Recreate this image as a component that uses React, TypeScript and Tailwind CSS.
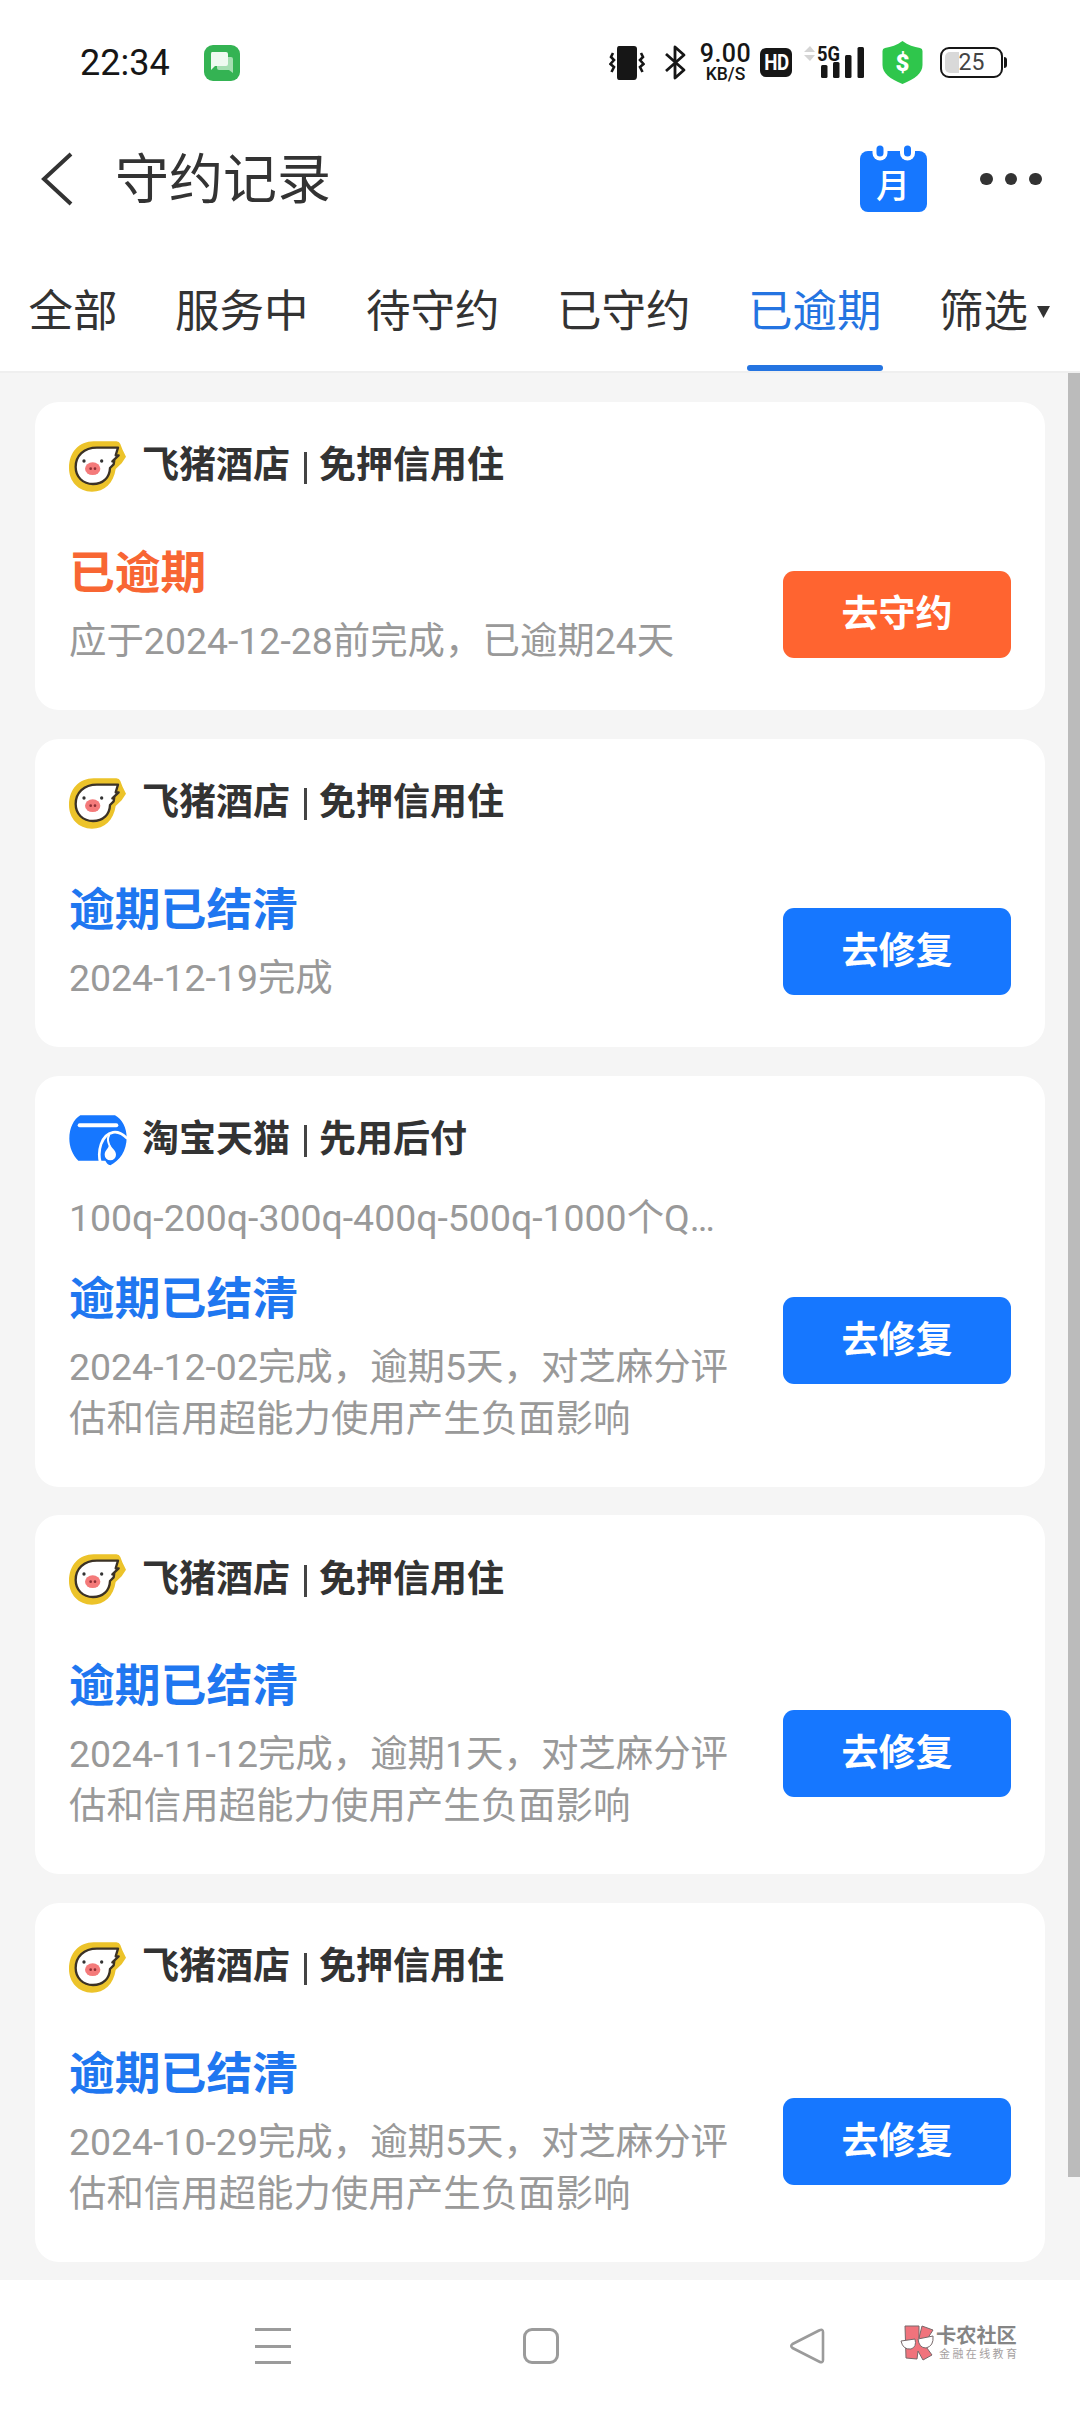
import React, { useState } from "react";
import classnames from "clsx";

type CardRecord = {
  id: number;
  brand: "fliggy" | "taobao";
  merchant: string;
  service: string;
  subtitle?: string;
  status: string;
  desc: string[];
  action: string;
  overdue?: boolean;
};

const tabs = ["全部", "服务中", "待守约", "已守约", "已逾期"];

const impact = "估和信用超能力使用产生负面影响";

const records: CardRecord[] = [
  {
    id: 1,
    brand: "fliggy",
    merchant: "飞猪酒店",
    service: "免押信用住",
    status: "已逾期",
    desc: ["应于2024-12-28前完成，已逾期24天"],
    action: "去守约",
    overdue: true,
  },
  {
    id: 2,
    brand: "fliggy",
    merchant: "飞猪酒店",
    service: "免押信用住",
    status: "逾期已结清",
    desc: ["2024-12-19完成"],
    action: "去修复",
  },
  {
    id: 3,
    brand: "taobao",
    merchant: "淘宝天猫",
    service: "先用后付",
    subtitle: "100q-200q-300q-400q-500q-1000个Q…",
    status: "逾期已结清",
    desc: ["2024-12-02完成，逾期5天，对芝麻分评", impact],
    action: "去修复",
  },
  {
    id: 4,
    brand: "fliggy",
    merchant: "飞猪酒店",
    service: "免押信用住",
    status: "逾期已结清",
    desc: ["2024-11-12完成，逾期1天，对芝麻分评", impact],
    action: "去修复",
  },
  {
    id: 5,
    brand: "fliggy",
    merchant: "飞猪酒店",
    service: "免押信用住",
    status: "逾期已结清",
    desc: ["2024-10-29完成，逾期5天，对芝麻分评", impact],
    action: "去修复",
  },
];

const FliggyLogo = () => (
  <svg className="h-[51px] w-[57px]" viewBox="28 37 171 153">
    <path
      d="M102 38H170Q179 38 182 46L188 62L199 84L186 104L168 121C162 164 134 189 97 189C56 189 28 158 28 118C28 70 58 39 102 38Z"
      fill="#ecc32a"
    />
    <path
      d="M175 57H112C72 57 48 82 48 115C48 145 70 166 100 166C130 166 150 147 151 118L162 107L164 94L158 98L177 80L168 80Z"
      fill="#fff"
      stroke="#3b3226"
      strokeWidth="7"
      strokeLinejoin="round"
    />
    <circle cx="73" cy="97" r="5" fill="#333" />
    <circle cx="126" cy="97" r="5" fill="#333" />
    <ellipse cx="99" cy="120" rx="23" ry="19" fill="#f47a7a" />
    <circle cx="93" cy="120" r="4" fill="#8c2f35" />
    <circle cx="106" cy="120" r="4" fill="#8c2f35" />
  </svg>
);

const TaobaoLogo = () => (
  <svg className="h-[51px] w-[58px]" viewBox="28 33 174 153">
    <path
      d="M62 34H166C188 46 201 72 201 100C201 142 180 170 152 184C145 182 140 177 137 170H56C38 152 29 128 29 104C29 72 42 46 62 34Z"
      fill="#1677ff"
    />
    <path d="M60 64H170" stroke="#fff" strokeWidth="12" strokeLinecap="round" />
    <path
      d="M122 176C113 142 124 92 160 85C178 82 190 90 203 104"
      fill="none"
      stroke="#fff"
      strokeWidth="8"
    />
    <path
      d="M149 92C141 106 146 116 151 128"
      fill="none"
      stroke="#fff"
      strokeWidth="6"
    />
    <path
      d="M149 118C150 132 135 138 135 152A17 17 0 0 0 169 152C169 138 154 132 149 118Z"
      fill="#fff"
    />
  </svg>
);

const StatusBar = () => {
  return (
    <div className="flex h-[123px] items-center pl-[80px] pt-[2px] text-[#161616]">
      <span className="w-[124px] text-[36px] leading-none">22:34</span>
      <svg className="h-9 w-9" viewBox="0 0 36 36">
        <rect width="36" height="36" rx="9" fill="#34b353" />
        <path d="M15 12H27Q29 12 29 14V28L25 25H15Q13 25 13 23V14Z" fill="#a5dfb2" />
        <path d="M8 7H22Q24 7 24 9V19Q24 21 22 21H11L7 25V9Q7 7 8 7Z" fill="#eefaf0" />
      </svg>
      {/* vibrate */}
      <svg
        className="ml-[369px] h-[34px] w-9"
        viewBox="0 0 36 34"
        fill="none"
        stroke="#161616"
        strokeWidth="2.6"
      >
        <path d="M10 0H25Q28 0 28 3V30Q28 34 25 34H10Q8 34 8 31V3Q8 0 10 0Z" fill="#161616" stroke="none" />
        <path d="M4 7L2 11L5 14L1.5 18L5 21L2.500 26" />
        <path d="M32 7L34 11L31 14L34.500 18L31 21L33.500 26" />
      </svg>
      <svg
        className="ml-[20px] h-[35px] w-[22px]"
        viewBox="0 0 22 35"
        fill="none"
        stroke="#161616"
        strokeWidth="2.8"
        strokeLinejoin="round"
      >
        <path d="M1 9L19 25L10 33V2L19 10L1 26" />
      </svg>
      <div className="ml-[12px] flex w-[53px] flex-col items-center font-medium">
        <span className="text-[25px] leading-[22px] tracking-[0.5px]">9.00</span>
        <span className="text-[17.500px] leading-[18px]">KB/S</span>
      </div>
      <span className="ml-[8px] flex h-[29px] w-8 items-center justify-center rounded-[6px] bg-[#161616] text-[22px] font-bold leading-none tracking-[-0.5px] text-white">
        <span className="scale-x-85">HD</span>
      </span>
      <svg className="ml-[12px] h-[46px] w-[62px]" viewBox="0 -5 62 46">
        <path d="M6 1L11 7H0Z M0 10H11L6 16Z" fill="#d4d4d4" />
        <text
          x="13"
          y="16"
          fontFamily="Roboto, sans-serif"
          fontSize="21"
          fontWeight="700"
          textLength="23"
          lengthAdjust="spacingAndGlyphs"
          fill="#161616"
        >
          5G
        </text>
        <g fill="#161616">
          <rect x="17" y="20" width="6.500" height="13" rx="1.500" />
          <rect x="29" y="17" width="6.500" height="16" rx="1.500" />
          <rect x="41" y="10" width="6.500" height="23" rx="1.500" />
          <rect x="53.500" y="2" width="6.500" height="31" rx="1.500" />
        </g>
      </svg>
      <svg className="ml-[16px] h-[43px] w-[41px]" viewBox="0 0 41 43">
        <path
          d="M20.500 0C26 4 32 6 38 7Q40.500 7.500 40.500 10V24C40.500 32 33 38 20.500 43C8 38 0.500 32 0.500 24V10Q0.500 7.500 3 7C9 6 15 4 20.500 0Z"
          fill="#2fc64c"
        />
        <text
          x="20.500"
          y="30"
          textAnchor="middle"
          fontFamily="Roboto, sans-serif"
          fontSize="24"
          fontWeight="900"
          fill="#fff"
        >
          $
        </text>
      </svg>
      <div className="ml-[17px] flex items-center gap-px">
        <div className="relative flex h-[31px] w-[63px] items-center justify-center rounded-[9px] border-2 border-[#161616]">
          <span className="absolute left-[3px] top-[3px] h-[21px] w-[14px] rounded-l-[5px] bg-[#d9d9d9]" />
          <span className="relative text-[23px] leading-none text-[#444]">25</span>
        </div>
        <span className="h-[11px] w-[3px] rounded-r-sm bg-[#161616]" />
      </div>
    </div>
  );
};

const Header = () => {
  return (
    <header className="flex h-[112px] items-center pl-[40px] text-[#333]">
      <svg
        className="h-[54px] w-[33px]"
        viewBox="0 0 33 54"
        fill="none"
        stroke="#333"
        strokeWidth="4"
      >
        <path d="M31 2L4 27L31 52" />
      </svg>
      <h1 className="ml-[42px] w-[744px] pt-[3px] text-[54px] leading-none">
        守约记录
      </h1>
      <svg className="h-[68px] w-[69px]" viewBox="0 0 69 68">
        <rect x="1" y="6" width="67" height="61" rx="8" fill="#1677ff" />
        <g stroke="#fff" strokeWidth="15" strokeLinecap="round">
          <path d="M21 3V8" />
          <path d="M48.500 3V8" />
        </g>
        <g stroke="#1677ff" strokeWidth="7" strokeLinecap="round">
          <path d="M21 4V8" />
          <path d="M48.500 4V8" />
        </g>
        <text
          x="34"
          y="53"
          textAnchor="middle"
          fontFamily="'Noto Sans CJK SC', sans-serif"
          fontSize="34"
          fontWeight="500"
          fill="#fff"
        >
          月
        </text>
      </svg>
      <div className="ml-[52px] flex gap-[12px]">
        {Array.from({ length: 3 }).map((_, index) => (
          <span className="h-[12.500px] w-[12.500px] rounded-full bg-[#333]" key={index} />
        ))}
      </div>
    </header>
  );
};

const Tabs = () => {
  const [active, setActive] = useState("已逾期");

  return (
    <nav className="flex h-[136px] items-stretch gap-[57.500px] pl-[28.500px] text-[44.500px] text-[#333]">
      {tabs.map((tab) => (
        <button
          className={classnames(
            "relative whitespace-nowrap pt-[18px] leading-none",
            tab === active && "text-[#2474e1]"
          )}
          onClick={() => setActive(tab)}
          key={tab}
        >
          {tab}
          {tab === active && (
            <span className="absolute -inset-x-px bottom-0 h-[6px] rounded-full bg-[#2474e1]" />
          )}
        </button>
      ))}
      <button className="flex items-center gap-[9px] whitespace-nowrap pt-[18px] leading-none">
        筛选
        <svg className="h-[12px] w-[13px]" viewBox="0 0 13 12">
          <path d="M0 0H13L6.500 12Z" fill="#333" />
        </svg>
      </button>
    </nav>
  );
};

const RecordCard = ({ record }: { record: CardRecord }) => {
  const cardCls = classnames(
    "rounded-[24px] bg-white px-[34px] pt-[38px]",
    record.subtitle && "pb-[42px]",
    !record.subtitle && record.desc.length > 1 && "pb-[42px]",
    record.desc.length === 1 && "pb-[43px]"
  );
  const statusCls = classnames(
    "h-[58px] pt-[2px] text-[45.800px] font-bold leading-[58px]",
    record.overdue ? "text-[#f86633]" : "text-[#1f77f0]"
  );
  const buttonCls = classnames(
    "h-[87px] w-[228px] rounded-[11px] text-[37px] font-bold leading-none text-white",
    record.overdue ? "bg-[#ff6430]" : "bg-[#1677ff]",
    record.subtitle ? "-mt-[33px]" : "mt-[19px]"
  );

  return (
    <li className={cardCls}>
      <div className="flex h-[52px] items-center text-[37px] font-bold text-[#333]">
        <span className="w-[73px] pt-px">
          {record.brand === "fliggy" ? <FliggyLogo /> : <TaobaoLogo />}
        </span>
        <span>{record.merchant}</span>
        <span className="ml-[14px] mr-[12px] mt-[3px] h-[32px] w-[3px] bg-[#444]" />
        <span>{record.service}</span>
      </div>
      {record.subtitle && (
        <p className="mt-[26px] h-[52px] text-[37.440px] leading-[52px] text-[#999]">
          {record.subtitle}
        </p>
      )}
      <div
        className={classnames(
          "flex items-center justify-between",
          record.subtitle ? "mt-[25px]" : "mt-[51px]"
        )}
      >
        <div>
          <p className={statusCls}>{record.status}</p>
          <div className="mt-[14px] text-[37.440px] leading-[52px] text-[#999]">
            {record.desc.map((line, index) => (
              <p className="whitespace-nowrap" key={index}>
                {line}
              </p>
            ))}
          </div>
        </div>
        <button className={buttonCls}>{record.action}</button>
      </div>
    </li>
  );
};

const Watermark = () => (
  <div className="flex items-center">
    <svg className="h-[36px] w-[35px]" viewBox="0 0 35 36">
      <g fill="#f0737c" stroke="#77686a" strokeWidth="1">
        <path d="M5 1H19V13L22 1L33 5L24 19L32 30L23 35L18 26L17 34L6 33Z" />
      </g>
      <g fill="#fff" stroke="#77686a" strokeWidth="1">
        <path d="M1 16L15 14Q17 22 11 24Q3 25 1 16Z" />
        <path d="M18 14L33 11Q34 21 26 23Q19 23 18 14Z" />
      </g>
    </svg>
    <div className="ml-px flex flex-col pt-[2px]">
      <span className="text-[20.200px] font-bold leading-[20px] text-[#858585]">
        卡农社区
      </span>
      <span className="mt-[2px] pl-[3px] text-[11px] leading-[13px] tracking-[2.400px] text-[#a5a0a0]">
        金融在线教育
      </span>
    </div>
  </div>
);

const BottomNav = () => {
  return (
    <footer className="flex h-[132px] items-center bg-white pl-[255px]">
      <div className="flex h-[36px] w-[36px] flex-col justify-between">
        {Array.from({ length: 3 }).map((_, index) => (
          <span className="h-[3px] w-full bg-[#9b9b9b]" key={index} />
        ))}
      </div>
      <span className="ml-[232px] h-[36px] w-[36px] rounded-[9px] border-[3px] border-[#9b9b9b]" />
      <svg
        className="ml-[230px] h-[36px] w-[36px]"
        viewBox="0 0 36 36"
        fill="none"
        stroke="#9b9b9b"
        strokeWidth="2.600"
        strokeLinejoin="round"
      >
        <path d="M30 2.500Q34 0.500 34 4V32Q34 35.500 30 33.500L3.500 20Q1 18 3.500 16Z" />
      </svg>
      <div className="-mt-[7px] ml-[75px]">
        <Watermark />
      </div>
    </footer>
  );
};

const App = () => {
  return (
    <div className="flex h-[2412px] w-[1080px] flex-col overflow-hidden bg-white font-[Roboto,'Noto_Sans_CJK_SC',sans-serif]">
      <StatusBar />
      <Header />
      <Tabs />
      <main className="relative h-[1909px] border-t-2 border-[#efefef] bg-[#f5f5f5] px-[35px] pt-[29px]">
        <ul className="flex flex-col gap-[28.800px]">
          {records.map((record) => (
            <RecordCard record={record} key={record.id} />
          ))}
        </ul>
        <span className="absolute right-0 top-0 h-[1804px] w-[12px] bg-[#bbb]" />
      </main>
      <BottomNav />
    </div>
  );
};

export default App;
